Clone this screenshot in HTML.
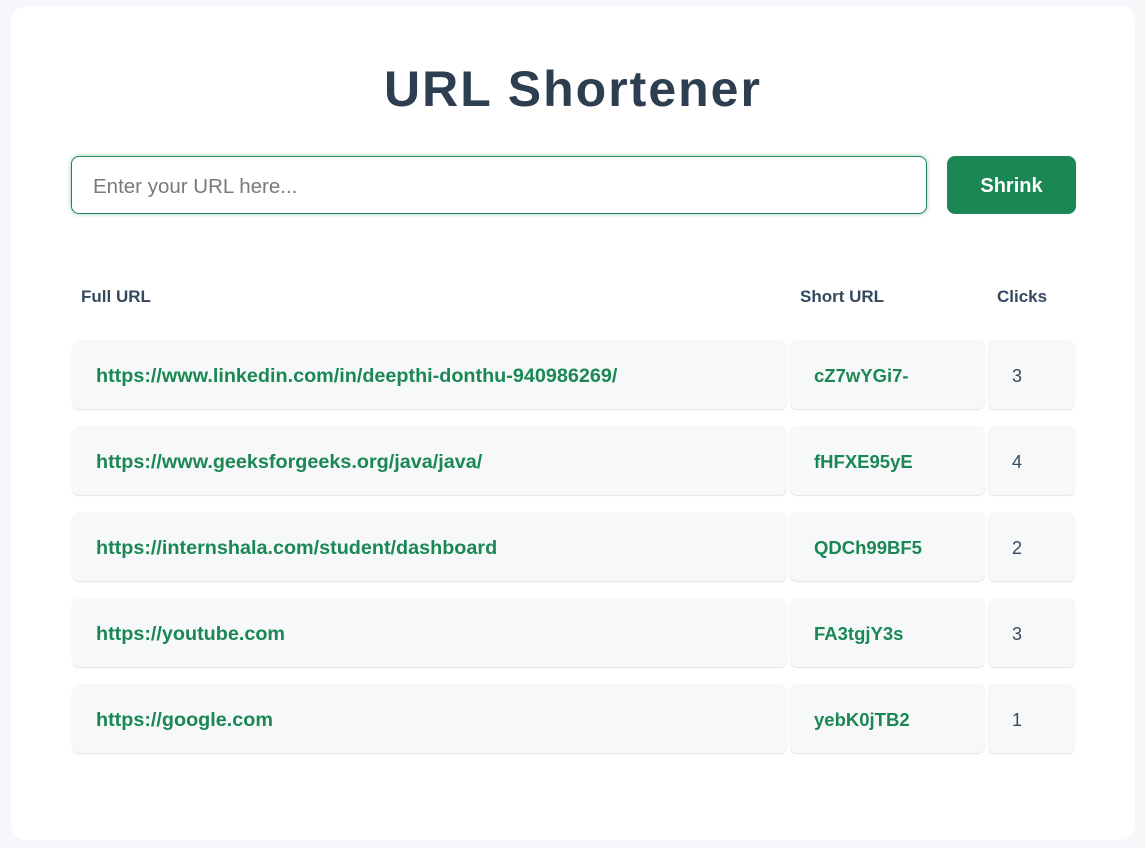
<!DOCTYPE html>
<html><head><meta charset="utf-8"><style>
*{box-sizing:border-box;margin:0;padding:0}
body{width:1145px;height:848px;background:#f5f7fa;font-family:"Liberation Sans","DejaVu Sans",sans-serif;overflow:hidden}
.card{position:absolute;left:11px;top:6px;width:1124px;height:834px;background:#fff;border-radius:16px}
h1{position:absolute;left:0;width:1124px;top:53px;text-align:center;font-size:50px;font-weight:bold;color:#2c3e50;letter-spacing:2px;line-height:60px}
.inp{position:absolute;left:60px;top:150px;width:856px;height:58px;border:1.5px solid #1a8754;border-radius:8px;box-shadow:0 0 5px rgba(26,135,84,.45);font-size:20.5px;color:#7a7a7a;padding:18px 0 0 21px}
.btn{position:absolute;left:936px;top:150px;width:129px;height:58px;background:#1a8754;border-radius:8px;color:#fff;font-size:20px;font-weight:bold;text-align:center;line-height:60px}
.th{position:absolute;top:281px;font-size:17px;font-weight:bold;color:#34495e}
.c{position:absolute;height:69px;background:#f7f8fa;border-radius:7px;box-shadow:0 1px 1px rgba(0,0,0,.12);font-size:18px;line-height:73px}
.g{color:#1a8754;font-weight:bold;font-size:19.8px}
.s{font-size:18.5px;line-height:71px}
.n{color:#34495e;padding-left:24px;line-height:72px}
</style></head><body><div class="card">
<h1>URL Shortener</h1>
<div class="inp">Enter your URL here...</div>
<div class="btn">Shrink</div>
<div class="th" style="left:70px">Full URL</div>
<div class="th" style="left:789px">Short URL</div>
<div class="th" style="left:986px">Clicks</div>

<div class="c g" style="left:61px;top:334px;width:715px;padding-left:24px">https://www.linkedin.com/in/deepthi-donthu-940986269/</div>
<div class="c g s" style="left:779px;top:334px;width:195px;padding-left:24px">cZ7wYGi7-</div>
<div class="c n" style="left:977px;top:334px;width:87px">3</div>

<div class="c g" style="left:61px;top:420px;width:715px;padding-left:24px">https://www.geeksforgeeks.org/java/java/</div>
<div class="c g s" style="left:779px;top:420px;width:195px;padding-left:24px">fHFXE95yE</div>
<div class="c n" style="left:977px;top:420px;width:87px">4</div>

<div class="c g" style="left:61px;top:506px;width:715px;padding-left:24px">https://internshala.com/student/dashboard</div>
<div class="c g s" style="left:779px;top:506px;width:195px;padding-left:24px">QDCh99BF5</div>
<div class="c n" style="left:977px;top:506px;width:87px">2</div>

<div class="c g" style="left:61px;top:592px;width:715px;padding-left:24px">https://youtube.com</div>
<div class="c g s" style="left:779px;top:592px;width:195px;padding-left:24px">FA3tgjY3s</div>
<div class="c n" style="left:977px;top:592px;width:87px">3</div>

<div class="c g" style="left:61px;top:678px;width:715px;padding-left:24px">https://google.com</div>
<div class="c g s" style="left:779px;top:678px;width:195px;padding-left:24px">yebK0jTB2</div>
<div class="c n" style="left:977px;top:678px;width:87px">1</div>
</div></body></html>
